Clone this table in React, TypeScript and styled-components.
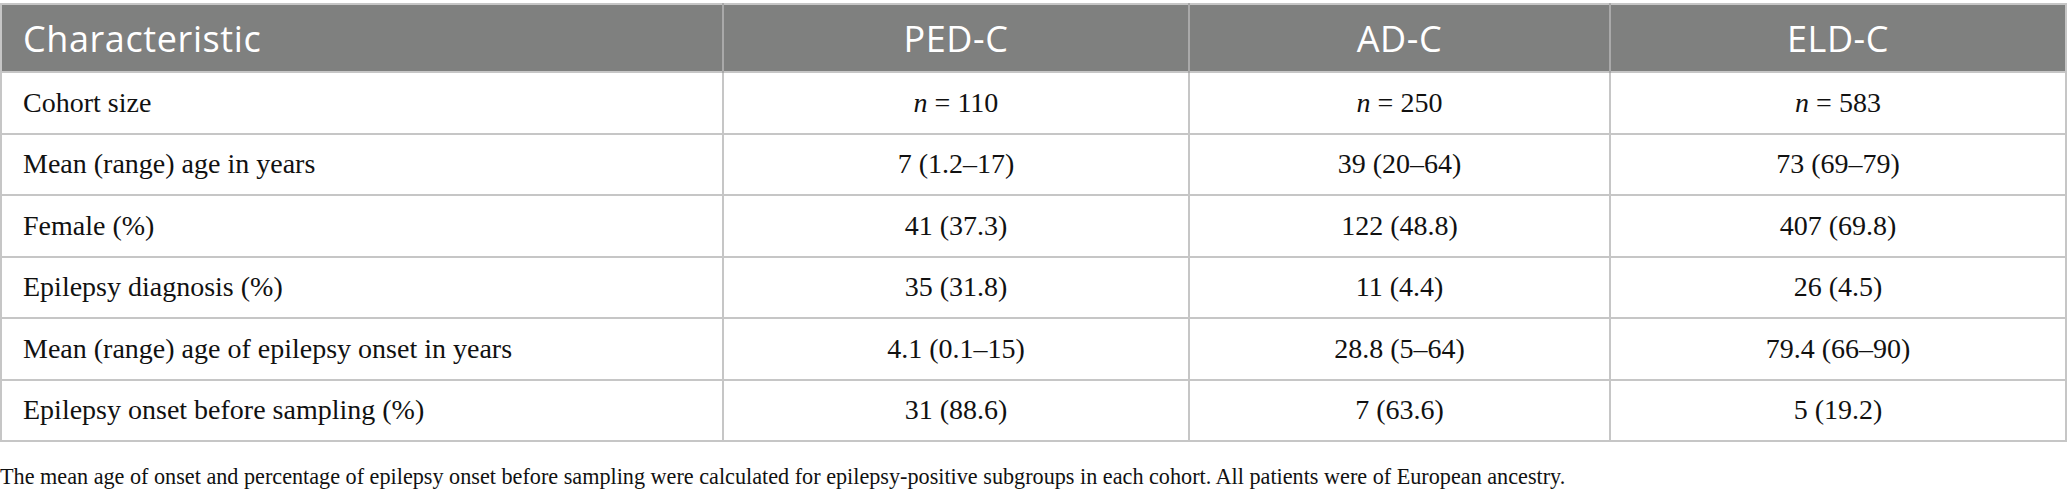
import React from 'react';
import styled, { createGlobalStyle } from 'styled-components';

const GlobalStyle = createGlobalStyle`
  html, body {
    margin: 0;
    padding: 0;
    background: #fff;
  }
`;

type Row = {
  label: string;
  values: React.ReactNode[];
};

const rows: Row[] = [
  {
    label: 'Cohort size',
    values: [
      <><i>n</i> = 110</>,
      <><i>n</i> = 250</>,
      <><i>n</i> = 583</>,
    ],
  },
  { label: 'Mean (range) age in years', values: ['7 (1.2–17)', '39 (20–64)', '73 (69–79)'] },
  { label: 'Female (%)', values: ['41 (37.3)', '122 (48.8)', '407 (69.8)'] },
  { label: 'Epilepsy diagnosis (%)', values: ['35 (31.8)', '11 (4.4)', '26 (4.5)'] },
  {
    label: 'Mean (range) age of epilepsy onset in years',
    values: ['4.1 (0.1–15)', '28.8 (5–64)', '79.4 (66–90)'],
  },
  { label: 'Epilepsy onset before sampling (%)', values: ['31 (88.6)', '7 (63.6)', '5 (19.2)'] },
];

const columns = ['PED-C', 'AD-C', 'ELD-C'];

const App: React.FC = () => {
  return (
    <Page>
      <GlobalStyle />
      <Table>
        <colgroup>
          <col style={{ width: 722 }} />
          <col style={{ width: 466 }} />
          <col style={{ width: 421 }} />
          <col />
        </colgroup>
        <thead>
          <tr>
            <HeadCell $align="left">Characteristic</HeadCell>
            {columns.map(c => (
              <HeadCell key={c} $align="center">
                {c}
              </HeadCell>
            ))}
          </tr>
        </thead>
        <tbody>
          {rows.map(r => (
            <BodyRow key={r.label}>
              <Cell $align="left">{r.label}</Cell>
              {r.values.map((v, i) => (
                <Cell key={i} $align="center">
                  {v}
                </Cell>
              ))}
            </BodyRow>
          ))}
        </tbody>
      </Table>
      <Footnote>
        The mean age of onset and percentage of epilepsy onset before sampling were calculated for
        epilepsy-positive subgroups in each cohort. All patients were of European ancestry.
      </Footnote>
    </Page>
  );
};

const Page = styled.div`
  padding-top: 3px;
  width: 2067px;
`;

const Table = styled.table`
  width: 100%;
  border-collapse: collapse;
  table-layout: fixed;
  border: 2px solid #c6c6c6;
`;

const HeadCell = styled.th<{ $align: 'left' | 'center' }>`
  height: 68px;
  padding: 0 21px;
  box-sizing: border-box;
  background: #7f807f;
  color: #fff;
  font-family: 'Open Sans', 'Noto Sans', sans-serif;
  font-weight: 400;
  font-size: 36px;
  letter-spacing: 0.6px;
  text-align: ${p => p.$align};
  border-left: 2px solid #a9a9a9;
  &:first-child {
    border-left: none;
  }
`;

const BodyRow = styled.tr`
  height: 61.5px;
`;

const Cell = styled.td<{ $align: 'left' | 'center' }>`
  padding: 0 21px;
  font-family: 'Liberation Serif', 'Times New Roman', serif;
  font-size: 28px;
  color: #111;
  text-align: ${p => p.$align};
  border: 2px solid #c6c6c6;
  white-space: nowrap;
`;

const Footnote = styled.p`
  margin: 18px 0 0;
  font-family: 'Liberation Serif', 'Times New Roman', serif;
  font-size: 22.2px;
  line-height: 34px;
  color: #111;
`;

export default App;
